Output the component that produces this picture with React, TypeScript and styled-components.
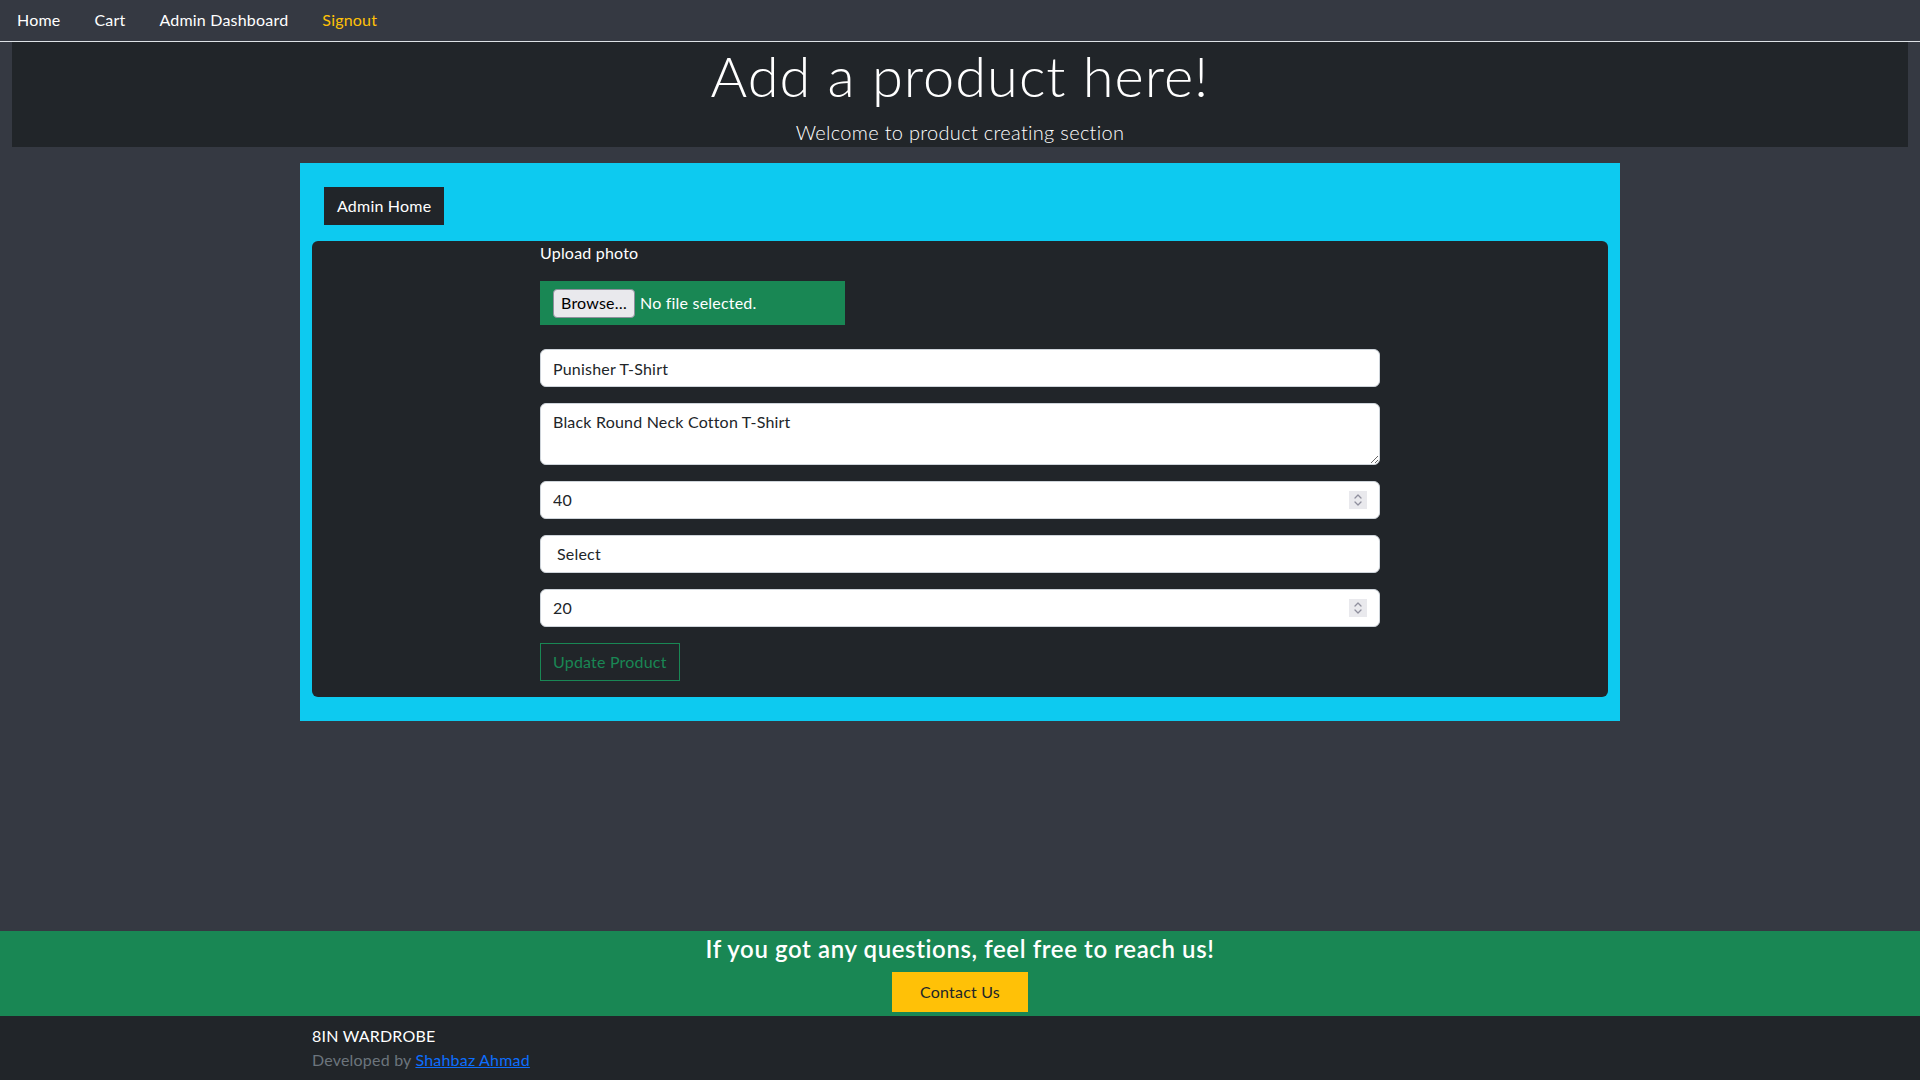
import React from "react";
import styled, { createGlobalStyle } from "styled-components";

const GlobalStyle = createGlobalStyle`
  * { box-sizing: border-box; }
  html, body { margin: 0; padding: 0; }
  body {
    background: #353942;
    font-family: "Lato", "Noto Sans", sans-serif;
    font-size: 16px;
    line-height: 24px;
    letter-spacing: 0.2px;
    color: #ffffff;
  }
  input, textarea, select, button { letter-spacing: 0.2px; }
`;

const Page = styled.div`
  min-height: 100vh;
  display: flex;
  flex-direction: column;
`;

const NavBar = styled.nav`
  height: 42px;
  border-bottom: 1px solid #dee2e6;
  display: flex;
  align-items: center;
  padding: 0 0 1px 0;
`;

const NavLink = styled.a<{ $accent?: boolean }>`
  color: ${(p) => (p.$accent ? "#ffc107" : "#ffffff")};
  text-decoration: none;
  padding: 0 17px;
  font-size: 16px;
  line-height: 24px;
`;

const Fluid = styled.div`
  padding: 0 12px;
`;

const Jumbotron = styled.header`
  background: #212529;
  text-align: center;
  color: #ffffff;
`;

const Title = styled.h2`
  margin: 0 0 8px;
  font-size: 56px;
  font-weight: 300;
  line-height: 1.2;
  letter-spacing: 1px;
`;

const Lead = styled.p`
  margin: 0;
  font-size: 20px;
  font-weight: 300;
  line-height: 30px;
  letter-spacing: 0.3px;
`;

const Panel = styled.main`
  width: 1320px;
  margin: 16px auto 0;
  background: #0dcaf0;
  padding: 24px;
`;

const DarkButton = styled.button`
  display: inline-block;
  background: #212529;
  border: 1px solid #212529;
  color: #ffffff;
  font-family: inherit;
  font-size: 16px;
  line-height: 24px;
  padding: 6px 12px;
  border-radius: 0;
  margin-bottom: 16px;
  cursor: pointer;
`;

const FormRow = styled.section`
  background: #212529;
  border-radius: 6px;
  margin: 0 -12px;
  padding-bottom: 16px;
`;

const FormColumn = styled.form`
  width: 840px;
  margin: 0 auto;
  display: flex;
  flex-direction: column;
  align-items: stretch;
`;

const FieldLabel = styled.span`
  display: block;
  color: #ffffff;
  font-size: 16px;
  line-height: 24px;
`;

const FileBox = styled.label`
  align-self: flex-start;
  margin: 16px 0 24px;
  width: 305px;
  height: 44px;
  display: flex;
  align-items: center;
  gap: 5px;
  background: #198754;
  border: 1px solid #198754;
  padding: 0 12px;
  color: #ffffff;
  font-size: 16px;
  cursor: pointer;
`;

const BrowseButton = styled.span`
  display: inline-flex;
  align-items: center;
  justify-content: center;
  height: 29px;
  width: 82px;
  background: #e9e9ed;
  border: 1px solid #8f8f9d;
  border-radius: 4px;
  color: #000000;
  font-size: 16px;
`;

const TextInput = styled.input`
  height: 38px;
  margin-bottom: 16px;
  border: 1px solid #ced4da;
  border-radius: 6px;
  background: #ffffff;
  padding: 6px 12px;
  font-family: inherit;
  font-size: 16px;
  line-height: 24px;
  color: #212529;
  outline: none;
`;

const TextArea = styled.textarea`
  height: 62px;
  margin-bottom: 16px;
  border: 1px solid #ced4da;
  border-radius: 6px;
  background: #ffffff;
  padding: 6px 12px;
  font-family: inherit;
  font-size: 16px;
  line-height: 24px;
  color: #212529;
  resize: vertical;
  outline: none;
`;

const NumberField = styled.div`
  height: 38px;
  margin-bottom: 16px;
  border: 1px solid #ced4da;
  border-radius: 6px;
  background: #ffffff;
  padding: 0 12px;
  display: flex;
  align-items: center;
`;

const NumberValue = styled.input`
  flex: 1;
  border: none;
  outline: none;
  background: transparent;
  padding: 0;
  font-family: inherit;
  font-size: 16px;
  line-height: 24px;
  color: #212529;
`;

const Spinner = styled.span`
  width: 18px;
  height: 18px;
  background: #e9e9ed;
  display: flex;
  align-items: center;
  justify-content: center;
`;

const SelectBox = styled.select`
  height: 38px;
  margin-bottom: 16px;
  border: 1px solid #ced4da;
  border-radius: 6px;
  background: #ffffff;
  padding: 6px 12px 6px 16px;
  font-family: inherit;
  font-size: 16px;
  line-height: 24px;
  color: #212529;
  appearance: none;
  -webkit-appearance: none;
  outline: none;
`;

const OutlineButton = styled.button`
  align-self: flex-start;
  background: transparent;
  border: 1px solid #198754;
  color: #198754;
  font-family: inherit;
  font-size: 16px;
  line-height: 24px;
  padding: 6px 12px;
  border-radius: 0;
  cursor: pointer;
`;

const Footer = styled.footer`
  margin-top: auto;
`;

const ContactBand = styled.div`
  background: #198754;
  text-align: center;
  padding: 4px 0 4px;
`;

const ContactHeading = styled.h4`
  margin: 0 0 8px;
  font-size: 24px;
  font-weight: 600;
  line-height: 1.2;
  letter-spacing: 0.6px;
  color: #ffffff;
`;

const ContactButton = styled.button`
  background: #ffc107;
  border: none;
  color: #212529;
  font-family: inherit;
  font-size: 16px;
  line-height: 24px;
  padding: 8px 28px;
  border-radius: 0;
  cursor: pointer;
`;

const BottomBar = styled.div`
  background: #212529;
  padding: 8px 0;
`;

const BottomInner = styled.div`
  width: 1296px;
  margin: 0 auto;
`;

const Brand = styled.div`
  color: #ffffff;
  font-size: 16px;
  line-height: 24px;
`;

const Credit = styled.div`
  color: #6c757d;
  font-size: 16px;
  line-height: 24px;
`;

const CreditLink = styled.a`
  color: #0d6efd;
  text-decoration: underline;
`;

const Chevrons = () => (
  <svg width="10" height="14" viewBox="0 0 10 14" fill="none" stroke="#8f8f9d" strokeWidth="1.3" strokeLinecap="round" strokeLinejoin="round">
    <path d="M2 5 L5 2 L8 5" />
    <path d="M2 9 L5 12 L8 9" />
  </svg>
);

export default function App() {
  return (
    <>
      <GlobalStyle />
      <Page>
        <NavBar>
          <NavLink href="#">Home</NavLink>
          <NavLink href="#">Cart</NavLink>
          <NavLink href="#">Admin Dashboard</NavLink>
          <NavLink href="#" $accent>Signout</NavLink>
        </NavBar>
        <Fluid>
          <Jumbotron>
            <Title>Add a product here!</Title>
            <Lead>Welcome to product creating section</Lead>
          </Jumbotron>
        </Fluid>
        <Panel>
          <DarkButton type="button">Admin Home</DarkButton>
          <FormRow>
            <FormColumn onSubmit={(e) => e.preventDefault()}>
              <FieldLabel>Upload photo</FieldLabel>
              <FileBox>
                <BrowseButton>Browse…</BrowseButton>
                No file selected.
              </FileBox>
              <TextInput defaultValue="Punisher T-Shirt" />
              <TextArea defaultValue="Black Round Neck Cotton T-Shirt" />
              <NumberField>
                <NumberValue defaultValue="40" />
                <Spinner><Chevrons /></Spinner>
              </NumberField>
              <SelectBox defaultValue="">
                <option value="">Select</option>
              </SelectBox>
              <NumberField>
                <NumberValue defaultValue="20" />
                <Spinner><Chevrons /></Spinner>
              </NumberField>
              <OutlineButton type="submit">Update Product</OutlineButton>
            </FormColumn>
          </FormRow>
        </Panel>
        <Footer>
          <ContactBand>
            <ContactHeading>If you got any questions, feel free to reach us!</ContactHeading>
            <ContactButton type="button">Contact Us</ContactButton>
          </ContactBand>
          <BottomBar>
            <BottomInner>
              <Brand>8IN WARDROBE</Brand>
              <Credit>
                Developed by <CreditLink href="#">Shahbaz Ahmad</CreditLink>
              </Credit>
            </BottomInner>
          </BottomBar>
        </Footer>
      </Page>
    </>
  );
}
